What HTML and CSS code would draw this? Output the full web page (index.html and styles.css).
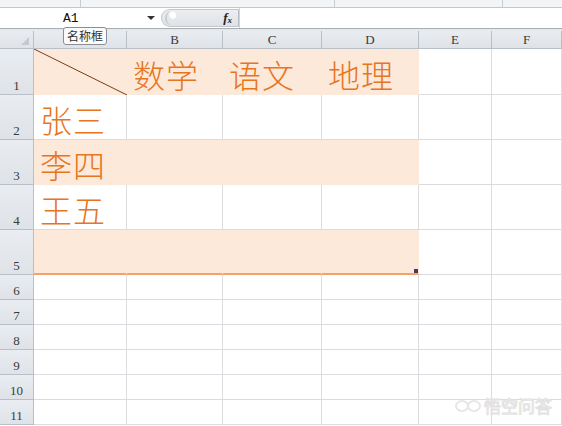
FILE: index.html
```html
<!DOCTYPE html>
<html>
<head>
<meta charset="utf-8">
<link rel="stylesheet" href="styles.css">
</head>
<body>
<div class="app">
  <div class="ribbon-edge">
    <div class="seg s1"></div>
    <div class="seg s2"></div>
    <div class="seg s3"></div>
    <div class="seg s4"></div>
  </div>
  <div class="formula-bar">
    <div class="name-box">
      <span class="ref">A1</span>
      <span class="drop"></span>
    </div>
    <div class="fx-pill">
      <span class="knob"></span>
      <span class="fx">f<sub>x</sub></span>
    </div>
    <div class="formula-input"></div>
  </div>
  <div class="sep"></div>
  <div class="sheet">
    <div class="hd corner"><span class="tri"></span></div>
    <div class="hd col">A</div>
    <div class="hd col">B</div>
    <div class="hd col">C</div>
    <div class="hd col">D</div>
    <div class="hd col">E</div>
    <div class="hd col">F</div>

    <div class="hd row">1</div>
    <div class="c fill diag">
      <svg class="diag-line" width="93" height="46" viewBox="0 0 93 46"><line x1="0" y1="0" x2="93" y2="46" stroke="#7a3b1c" stroke-width="1"/></svg>
    </div>
    <div class="c fill"><span class="t">数学</span></div>
    <div class="c fill"><span class="t">语文</span></div>
    <div class="c fill"><span class="t">地理</span></div>
    <div class="c"></div>
    <div class="c"></div>

    <div class="hd row">2</div>
    <div class="c"><span class="t">张三</span></div>
    <div class="c"></div>
    <div class="c"></div>
    <div class="c"></div>
    <div class="c"></div>
    <div class="c"></div>

    <div class="hd row">3</div>
    <div class="c fill"><span class="t">李四</span></div>
    <div class="c fill"></div>
    <div class="c fill"></div>
    <div class="c fill"></div>
    <div class="c"></div>
    <div class="c"></div>

    <div class="hd row">4</div>
    <div class="c"><span class="t">王五</span></div>
    <div class="c"></div>
    <div class="c"></div>
    <div class="c"></div>
    <div class="c"></div>
    <div class="c"></div>

    <div class="hd row">5</div>
    <div class="c fill last"></div>
    <div class="c fill last"></div>
    <div class="c fill last"></div>
    <div class="c fill last handle-cell"><span class="handle"></span></div>
    <div class="c"></div>
    <div class="c"></div>

    <div class="hd row">6</div>
    <div class="c"></div><div class="c"></div><div class="c"></div><div class="c"></div><div class="c"></div><div class="c"></div>
    <div class="hd row">7</div>
    <div class="c"></div><div class="c"></div><div class="c"></div><div class="c"></div><div class="c"></div><div class="c"></div>
    <div class="hd row">8</div>
    <div class="c"></div><div class="c"></div><div class="c"></div><div class="c"></div><div class="c"></div><div class="c"></div>
    <div class="hd row">9</div>
    <div class="c"></div><div class="c"></div><div class="c"></div><div class="c"></div><div class="c"></div><div class="c"></div>
    <div class="hd row">10</div>
    <div class="c"></div><div class="c"></div><div class="c"></div><div class="c"></div><div class="c"></div><div class="c"></div>
    <div class="hd row">11</div>
    <div class="c"></div><div class="c"></div><div class="c"></div><div class="c"></div><div class="c"></div><div class="c"></div>
  </div>

  <div class="tooltip">名称框</div>

  <div class="watermark">
    <svg class="wm-logo" width="26" height="14" viewBox="0 0 26 14"><ellipse cx="7" cy="7" rx="6" ry="5" fill="none" stroke="#e6e6e6" stroke-width="2"/><ellipse cx="19" cy="7" rx="6" ry="5" fill="none" stroke="#e6e6e6" stroke-width="2"/></svg>
    <span class="wm-text">悟空问答</span>
  </div>
</div>
</body>
</html>
```
FILE: styles.css
```css
* { box-sizing: border-box; }
html, body { margin: 0; padding: 0; background: #ffffff; }
.app {
  position: relative;
  width: 562px;
  height: 426px;
  overflow: hidden;
  font-family: "Liberation Serif", serif;
}
.ribbon-edge {
  display: flex;
  height: 8px;
  background: #f3f4f6;
  border-bottom: 1px solid #c4c8ce;
}
.ribbon-edge .seg { height: 100%; border-right: 1px solid #c9cdd2; }
.ribbon-edge .s1 { width: 81px; }
.ribbon-edge .s2 { width: 254px; }
.ribbon-edge .s3 { width: 168px; }
.ribbon-edge .s4 { flex: 1; border-right: none; }

.formula-bar {
  display: flex;
  height: 21px;
  background: #ffffff;
  border-bottom: 1px solid #a9aeb5;
}
.name-box {
  width: 158px;
  display: flex;
  align-items: center;
  position: relative;
  background: #fff;
}
.name-box .ref {
  margin-left: 63px;
  font-family: "Liberation Mono", monospace;
  font-size: 13px;
  color: #111;
}
.name-box .drop {
  position: absolute;
  left: 147px;
  top: 8px;
  width: 0; height: 0;
  border-left: 4px solid transparent;
  border-right: 4px solid transparent;
  border-top: 4px solid #333;
}
.fx-pill {
  width: 78px;
  margin: 1px 0 1px 3px;
  border-radius: 9px 0 0 9px;
  background: linear-gradient(#eceef0, #dfe2e6);
  border: 1px solid #c3c7cc;
  border-right: 1px solid #b8bcc2;
  display: flex;
  align-items: center;
  position: relative;
}
.fx-pill .knob {
  margin-left: 3px;
  width: 12px; height: 14px;
  border-radius: 50%;
  border-left: 2px solid #c9ccd0;
  background: radial-gradient(circle at 60% 30%, #ffffff 0 3px, transparent 4px);
}
.fx-pill .fx {
  margin-left: auto;
  margin-right: 6px;
  font-family: "Liberation Serif", serif;
  font-style: italic;
  font-weight: bold;
  font-size: 13px;
  color: #222;
  line-height: 1;
}
.fx-pill .fx sub { font-size: 9px; vertical-align: -1px; }
.formula-input { flex: 1; background: #fff; border-left: 1px solid #d0d3d8; }

.sep {
  height: 2px;
  background: #e6e8eb;
}

.sheet {
  display: grid;
  grid-template-columns: 34px 93px 96px 99px 97px 73px 1fr;
  grid-template-rows: 18px 46px 45px 45px 45px 45px repeat(6, 25px);
}
.hd {
  background: linear-gradient(#e9ecf0, #dfe3e8);
  border-right: 1px solid #b9bfc7;
  border-bottom: 1px solid #b9bfc7;
  color: #3a3a3a;
  font-family: "Liberation Serif", serif;
  font-size: 13px;
  display: flex;
  justify-content: center;
}
.hd.col { align-items: center; padding-top: 1px; }
.hd.row { align-items: flex-end; line-height: 1; padding-bottom: 2px; }
.hd.corner { position: relative; }
.hd.corner .tri {
  position: absolute;
  right: 4px; bottom: 3px;
  width: 0; height: 0;
  border-left: 8px solid transparent;
  border-bottom: 8px solid #c4c9d0;
}

.c {
  border-right: 1px solid #dadcdf;
  border-bottom: 1px solid #dadcdf;
  background: #fff;
  display: flex;
  align-items: flex-end;
  padding: 0 0 4px 6px;
  position: relative;
}
.c.fill {
  background: #fde9d9;
  border-right-color: #fde9d9;
  border-bottom-color: #fde9d9;
}
.c.fill.last {
  border-bottom: 2px solid #f6a167;
}
.t {
  font-family: "Noto Sans CJK SC", sans-serif;
  font-weight: 300;
  font-size: 32px;
  line-height: 1;
  color: #e6751f;
  letter-spacing: 1px;
}
.diag-line { position: absolute; left: 0; top: 0; }
.handle {
  position: absolute;
  right: 0px; bottom: 0px;
  width: 4px; height: 4px;
  background: #3b3f5a;
}

.tooltip {
  position: absolute;
  left: 63px;
  top: 27px;
  height: 18px;
  padding: 0 3px;
  background: #fbfbfb;
  border: 1px solid #8a8e94;
  border-radius: 3px;
  font-family: "Noto Sans CJK SC", sans-serif;
  font-size: 12px;
  line-height: 16px;
  color: #333;
}
.watermark {
  position: absolute;
  right: 10px;
  bottom: 8px;
  display: flex;
  align-items: center;
  gap: 3px;
}
.wm-text {
  font-family: "Noto Sans CJK SC", sans-serif;
  font-size: 17px;
  color: #ffffff;
  -webkit-text-stroke: 1px #e2e2e2;
  letter-spacing: 0;
}
```
